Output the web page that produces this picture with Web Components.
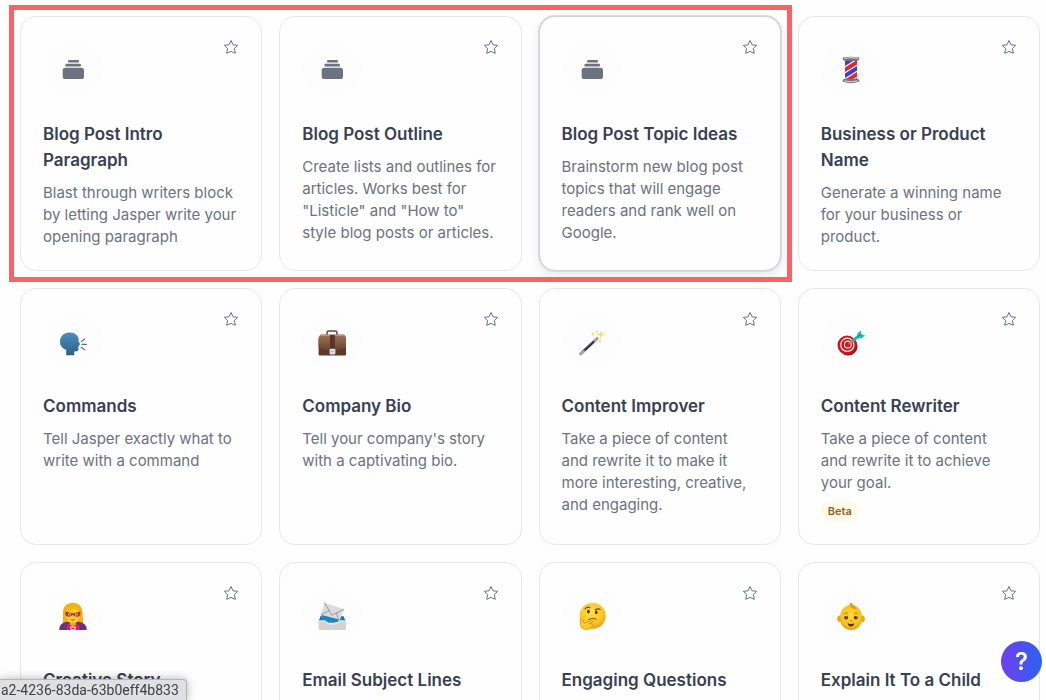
<!DOCTYPE html>
<html lang="en">
<head>
<meta charset="utf-8">
<meta name="viewport" content="width=device-width, initial-scale=1">
<title>Templates</title>
<style>
	body {
		margin: 0;
		height: 100vh;
		overflow: hidden;
		background: #fefefe;
		font-family: Inter, "Liberation Sans", sans-serif;
		color: #374151;
	}
</style>
</head>
<body>
<template-grid>
	<template-card icon="stack" name="Blog Post Intro Paragraph">Blast through writers block by letting Jasper write your opening paragraph</template-card>
	<template-card icon="stack" name="Blog Post Outline">Create lists and outlines for articles. Works best for "Listicle" and "How to" style blog posts or articles.</template-card>
	<template-card icon="stack" name="Blog Post Topic Ideas" active>Brainstorm new blog post topics that will engage readers and rank well on Google.</template-card>
	<template-card icon="barber" name="Business or Product Name">Generate a winning name for your business or product.</template-card>
	<template-card icon="speaking" name="Commands">Tell Jasper exactly what to write with a command</template-card>
	<template-card icon="briefcase" name="Company Bio">Tell your company's story with a captivating bio.</template-card>
	<template-card icon="wand" name="Content Improver">Take a piece of content and rewrite it to make it more interesting, creative, and engaging.</template-card>
	<template-card icon="dart" name="Content Rewriter">Take a piece of content and rewrite it to achieve your goal.<status-badge slot="badge">Beta</status-badge></template-card>
	<template-card icon="hero" name="Creative Story"></template-card>
	<template-card icon="mail" name="Email Subject Lines"></template-card>
	<template-card icon="thinking" name="Engaging Questions"></template-card>
	<template-card icon="baby" name="Explain It To a Child"></template-card>
</template-grid>
<link-status>a2-4236-83da-63b0eff4b833</link-status>
<help-button>?</help-button>

<script>
// All icons are drawn on a 28x28 grid.
const ICONS = {
	stack: `
		<g fill="#6b7280">
			<rect x="9" y="4" width="11" height="2.6" rx="1.1"/>
			<rect x="6.4" y="7.7" width="15.6" height="2.7" rx="1.2"/>
			<rect x="3.7" y="11.7" width="21.3" height="11.3" rx="2.6"/>
		</g>`,
	barber: `
		<defs><clipPath id="pole"><rect x="8" y="4" width="12" height="20"/></clipPath></defs>
		<rect x="8" y="4" width="12" height="20" fill="#f6f3fb"/>
		<g clip-path="url(#pole)" fill="none" stroke-width="3.8">
			<path d="M6 9 22-1M6 21 22 11M6 33 22 23" stroke="#3b38dc"/>
			<path d="M6 15 22 5M6 27 22 17" stroke="#e9222c"/>
		</g>
		<path d="M5.7 1.6Q14 0 22.3 1.6V3Q21.5 5 19.6 5H8.4Q6.5 5 5.7 3ZM5.7 24Q7 22.6 9 22.8H19Q21 22.6 22.3 24V25.6Q14 29 5.7 25.6Z" fill="#77747a"/>
		<path d="M7 2.4Q14 1 21 2.4M7.4 24.8Q14 27 20.6 24.8" stroke="#ddd" stroke-width="1" fill="none"/>`,
	speaking: `
		<defs><linearGradient id="head" x1="0" y1="0" x2="0" y2="1"><stop stop-color="#4e8db9"/><stop offset="1" stop-color="#2f5f8b"/></linearGradient></defs>
		<path d="M10 4.6C16 4.3 19.6 8 19.8 11.5L19.4 13.2 21.2 16Q21 16.8 19.8 17L20 18.6 18.8 19.6 19.7 20.6Q19.8 23 17.6 23.3L15.2 23.4V27.2H7.2V21.8C3 20.4 1 17.4 1 13.5C1 8.4 5 4.8 10 4.6Z" fill="url(#head)"/>
		<path d="M22.2 13.6 25.8 11M23 16.4H27.4M22.2 19.2 25.8 21.9" stroke="#416f94" stroke-width="1.1" stroke-linecap="round"/>`,
	briefcase: `
		<defs><linearGradient id="leather" x1="0" y1="0" x2="0" y2="1"><stop stop-color="#9c7156"/><stop offset="1" stop-color="#6c4430"/></linearGradient></defs>
		<path d="M9 7.2V4.6Q9 3 10.8 3H17.2Q19 3 19 4.6V7.2" fill="none" stroke="#6a4238" stroke-width="1.5"/>
		<path d="M2.7 6.8H26L28 10V26.2Q28 27.6 26.6 27.6H2Q.6 27.6.6 26.2V10Z" fill="#5f3a2a"/>
		<path d="M2.7 6.8H26Q28 7.6 28 11V19.2Q24 21.6 18 22H10.6Q4.6 21.6.6 19.2V11Q.8 7.6 2.7 6.8Z" fill="url(#leather)"/>
		<path d="M2.8 7.3H25.8" stroke="#c59e83" stroke-width="1"/>
		<path d="M12 7H16.8V21H12Z" fill="#593326"/>
		<rect x="11.6" y="20.7" width="5.8" height="5.7" rx=".8" fill="#dfdcda"/>
		<path d="M13 23.5H16" stroke="#aaa" stroke-width=".8"/>`,
	wand: `
		<path d="M2.8 25.8 19 10.6" stroke="#353539" stroke-width="2.6" stroke-linecap="round"/>
		<path d="M2.5 26 5.6 23.1M16.8 12.6 19.4 10.2" stroke="#aaa9ad" stroke-width="2.6" stroke-linecap="round"/>
		<path d="M4.8 22.6 16.2 11.9" stroke="#77777b" stroke-width=".6"/>
		<path d="M22.7 2 23.5 5.6 27 6.6 23.6 7.6 22.7 11.2 21.8 7.6 18.4 6.6 21.9 5.6ZM15 3.5 15.6 5.4 17.4 6 15.6 6.6 15 8.5 14.4 6.6 12.6 6 14.4 5.4ZM22 10.8 22.6 12.6 24.2 13.2 22.6 13.8 22 15.6 21.4 13.8 19.8 13.2 21.4 12.6Z" fill="#f8d861"/>
		<circle cx="19" cy="3.6" r=".8" fill="#f4bd50"/>`,
	dart: `
		<ellipse cx="11.2" cy="18" rx="9.3" ry="9.6" fill="#8e1117"/>
		<circle cx="10" cy="17.1" r="9.5" fill="#d4131d"/>
		<circle cx="10.3" cy="16.8" r="6.6" fill="none" stroke="#f6eded" stroke-width="1.2"/>
		<circle cx="10.8" cy="16.5" r="3.4" fill="none" stroke="#f6eded" stroke-width="1.1"/>
		<path d="M11 16.4 16 12.4" stroke="#bd8b45" stroke-width="1.2"/>
		<path d="M14.8 13.6 22 7.6" stroke="#1fb5ab" stroke-width="2.8"/>
		<path d="M19.6 9.6 20.4 5.2 24 2.6 24.4 6.2 28 7.2 25 10.2 21 10.6Z" fill="#23bdb4"/>
		<path d="M20.6 8.8 24.2 6.4" stroke="#0c7f82" stroke-width="1"/>`,
	hero: `
		<path d="M4 20V10.2C4 4.6 8 .8 13.8.8S23.4 5 23.4 10.2L24.2 21H3.4Z" fill="#f2b10d"/>
		<path d="M.2 28Q.2 21 7.6 19.8L13.8 21 20 19.8Q27.8 21 27.8 28Z" fill="#67327f"/>
		<path d="M7 28 8.2 22.8 13.8 20.8 19.8 22.8 21 28Z" fill="#e6195d"/>
		<path d="M10.8 18H17V22.6L13.9 24.4 10.8 22.6Z" fill="#efa816"/>
		<ellipse cx="13.9" cy="13.4" rx="6.9" ry="7.7" fill="#ffd12f"/>
		<path d="M6.6 12C7 5 12 7 15.8 3.8Q20.8 6.4 21 12Q18.8 7.2 14.8 7Q9.6 9.4 6.6 12Z" fill="#f5bb15"/>
		<path d="M6.4 9.6Q10.2 10.8 13.9 11.2 17.6 10.8 21.4 9.6 22 14.6 18.4 14.7 15.7 14.7 13.9 12.9 12.1 14.7 9.4 14.7 5.8 14.6 6.4 9.6Z" fill="#d22330"/>
		<ellipse cx="10.5" cy="12.6" rx="1.5" ry="1" fill="#fff2df"/>
		<ellipse cx="17.3" cy="12.6" rx="1.5" ry="1" fill="#fff2df"/>
		<circle cx="10.6" cy="12.6" r=".6" fill="#4b2320"/>
		<circle cx="17.2" cy="12.6" r=".6" fill="#4b2320"/>
		<path d="M11.2 17.4Q13.9 19.6 16.6 17.4Z" fill="#b64525"/>
		<path d="M11.4 25H16.6L15.8 27.8H12.2Z" fill="none" stroke="#fff" stroke-width="1"/>`,
	mail: `
		<path d="M2.4 14.2H25.5L27.8 20H.6Z" fill="#165f92"/>
		<path d="M3 15H25L26.4 20H1.6Z" fill="#207fbf"/>
		<path d="M6.5 .8 26 7.3 21.6 18.6 15 17.4 2.8 12.8Z" fill="#dadbdc"/>
		<path d="M6.5 .8 13.8 13.2 26 7.3M2.8 12.8 11.1 8.6M18.4 11 21 18.4" fill="none" stroke="#929599" stroke-width=".9"/>
		<path d="M3 12.8Q15 16.2 20.6 17.2L17 20.8H10Z" fill="#1587c9"/>
		<path d="M.6 18.4H7.6Q9.8 21.8 14.2 21.8T20.8 18.4H28V26.6Q28 28 26.6 28H2Q.6 28 .6 26.6Z" fill="#d6d3cf"/>
		<path d="M1.2 19H7.2Q9.6 22.6 14.2 22.6T21.2 19H27.4" fill="none" stroke="#efedeb" stroke-width=".9"/>`,
	thinking: `
		<defs><radialGradient id="face" cx=".45" cy=".35" r=".65"><stop stop-color="#ffe34b"/><stop offset=".7" stop-color="#fcc51f"/><stop offset="1" stop-color="#ef9e16"/></radialGradient></defs>
		<circle cx="14.6" cy="13.8" r="13" fill="url(#face)"/>
		<path d="M7 6.8Q9.4 4.2 12 5.8M17.2 7.8Q19.8 6.2 22.2 7.4" fill="none" stroke="#76400e" stroke-width="1.1" stroke-linecap="round"/>
		<ellipse cx="10.4" cy="9.6" rx="1.4" ry="1.9" fill="#5c310b"/>
		<ellipse cx="18.2" cy="10.4" rx="1.4" ry="1.8" fill="#5c310b"/>
		<path d="M10.6 17.4Q14 15.4 18 17" fill="none" stroke="#80500f" stroke-width="1" stroke-linecap="round"/>
		<path d="M2.2 18Q3.4 16.2 5 18L6.2 21.2 13.4 18.4Q15.4 18 15 19.8L11.2 21.8H14Q15.4 22.4 14.2 23.8Q13.2 27.4 8 27.4Q3 27.2 2.4 22.6Z" fill="#ffca2d" stroke="#df8b16" stroke-width=".8"/>`,
	baby: `
		<defs><radialGradient id="skin" cx=".5" cy=".4" r=".6"><stop stop-color="#ffd83a"/><stop offset=".75" stop-color="#fbc11b"/><stop offset="1" stop-color="#e49a12"/></radialGradient></defs>
		<ellipse cx="2.7" cy="16.8" rx="2.5" ry="3.3" fill="#eda718"/>
		<ellipse cx="25.3" cy="16.8" rx="2.5" ry="3.3" fill="#eda718"/>
		<path d="M14 3C21 3 25 8.6 25 16S20 28 14 28 3 23.4 3 16 7 3 14 3Z" fill="url(#skin)"/>
		<path d="M12.2 4Q12.2 1 15.4.6Q14.4 2.4 17.4 3.6L19.8 6.8Q18 8 14.6 5.8" fill="#e29f18"/>
		<path d="M7.4 11.6Q9 10.4 10.8 11.4M17.2 11.4Q19 10.4 20.6 11.6" stroke="#a86710" stroke-width=".8" fill="none"/>
		<circle cx="9.2" cy="15.6" r="1.9" fill="#4b2c10"/>
		<circle cx="18.8" cy="15.6" r="1.9" fill="#4b2c10"/>
		<circle cx="9.6" cy="15" r=".5" fill="#fff"/>
		<circle cx="19.2" cy="15" r=".5" fill="#fff"/>
		<path d="M12.8 18.6Q14 19.4 15.2 18.6" stroke="#b86c13" stroke-width=".9" fill="none"/>
		<path d="M10.6 21.2Q14 22.6 17.4 21.2Q16.6 24.4 14 24.4T10.6 21.2Z" fill="#562d13"/>`,
};

// <template-grid> lays the cards out in four columns and frames the first three.
class TemplateGrid extends HTMLElement {
	constructor() {
		super();
		this.attachShadow({ mode: "open" }).innerHTML = `
			<style>
				:host { display: block; }
				.grid {
					position: relative;
					display: grid;
					grid-template-columns: repeat(4, minmax(0, 1fr));
					grid-auto-rows: minmax(255px, auto);
					gap: 17px;
					padding: 16px 6px 16px 20px;
				}
				.frame {
					position: absolute;
					grid-area: 1 / 1 / 2 / 4;
					inset: -11px;
					border: 5px solid #fd6067;
					pointer-events: none;
				}
			</style>
			<main class="grid">
				<slot></slot>
				<div class="frame"></div>
			</main>
		`;
	}
}

// <template-card icon="key of ICONS" name="title" active>description</template-card>
class TemplateCard extends HTMLElement {
	constructor() {
		super();
		this.attachShadow({ mode: "open" });
	}

	connectedCallback() {
		const name = this.getAttribute("name");
		this.shadowRoot.innerHTML = `
			<style>
				:host {
					display: block;
					box-sizing: border-box;
					padding: 22px;
					border: 1px solid #e7e8ea;
					border-radius: 16px;
					background: #fefefe;
				}
				:host([active]) {
					border-color: #d1d3d8;
					box-shadow: 0 0 0 1px #d8dade, 0 4px 10px 1px rgba(40, 50, 80, 0.1);
				}
				header {
					display: flex;
					justify-content: space-between;
					align-items: flex-start;
					margin-bottom: 22px;
				}
				.icon {
					display: grid;
					place-items: center;
					box-sizing: border-box;
					width: 60px;
					height: 60px;
					padding-top: 2px;
					border-radius: 50%;
					background: #fdfdfd;
				}
				svg { display: block; }
				button {
					padding: 0;
					border: 0;
					background: none;
					cursor: pointer;
				}
				h3 {
					margin: 0 0 9px;
					font-size: 17px;
					font-weight: 600;
					line-height: 26px;
				}
				p {
					margin: 0;
					color: #6b7280;
					font-size: 15px;
					line-height: 22px;
				}
			</style>
			<header>
				<div class="icon"><svg width="28" height="28" viewBox="0 0 28 28" fill="none" aria-hidden="true">${ICONS[this.getAttribute("icon")]}</svg></div>
				<button type="button" aria-label="Favorite ${name}">
					<svg width="16" height="16" viewBox="0 0 16 16" fill="none" stroke="#6b7280" stroke-width="1" stroke-linejoin="round"><path d="M8 1.5 10 5.8 14.6 6.3 11.4 9.6 12.3 14.3 8 12.4 3.7 14.3 4.6 9.6 1.4 6.3 6 5.8Z"/></svg>
				</button>
			</header>
			<h3>${name}</h3>
			<p><slot></slot></p>
			<slot name="badge"></slot>
		`;
	}
}

class StatusBadge extends HTMLElement {
	constructor() {
		super();
		this.attachShadow({ mode: "open" }).innerHTML = `
			<style>
				:host {
					display: block;
					width: fit-content;
					margin-top: 7px;
					margin-bottom: 1px;
					padding: 0 7px;
					border-radius: 10px;
					background: #fffbe6;
					color: #975a2b;
					font-size: 11px;
					font-weight: 600;
					line-height: 20px;
				}
			</style>
			<slot></slot>
		`;
	}
}

// Link target bubble in the bottom left corner of the window
class LinkStatus extends HTMLElement {
	constructor() {
		super();
		this.attachShadow({ mode: "open" }).innerHTML = `
			<style>
				:host {
					position: fixed;
					left: 0;
					bottom: 0;
					padding: 0 7px 0 1px;
					border: 1px solid #b4b5b8;
					border-width: 1px 1px 0 0;
					border-radius: 0 4px 0 0;
					background: #dfe0e3;
					box-shadow: 0 0 10px rgba(0, 0, 0, 0.3);
					color: #3f4145;
					font-family: Roboto, "Liberation Sans", sans-serif;
					font-size: 14px;
					line-height: 20px;
				}
			</style>
			<slot></slot>
		`;
	}
}

class HelpButton extends HTMLElement {
	constructor() {
		super();
		this.attachShadow({ mode: "open" }).innerHTML = `
			<style>
				:host {
					position: fixed;
					right: 4px;
					bottom: 18px;
				}
				button {
					display: block;
					width: 41px;
					height: 41px;
					padding: 0;
					border: 0;
					border-radius: 50%;
					background: linear-gradient(90deg, #713fee, #2b62f2);
					color: #fff;
					font: 600 24px/41px Inter, "Liberation Sans", sans-serif;
					cursor: pointer;
				}
			</style>
			<button type="button"><slot></slot></button>
		`;
	}
}

customElements.define("template-grid", TemplateGrid);
customElements.define("template-card", TemplateCard);
customElements.define("status-badge", StatusBadge);
customElements.define("link-status", LinkStatus);
customElements.define("help-button", HelpButton);
</script>
</body>
</html>
